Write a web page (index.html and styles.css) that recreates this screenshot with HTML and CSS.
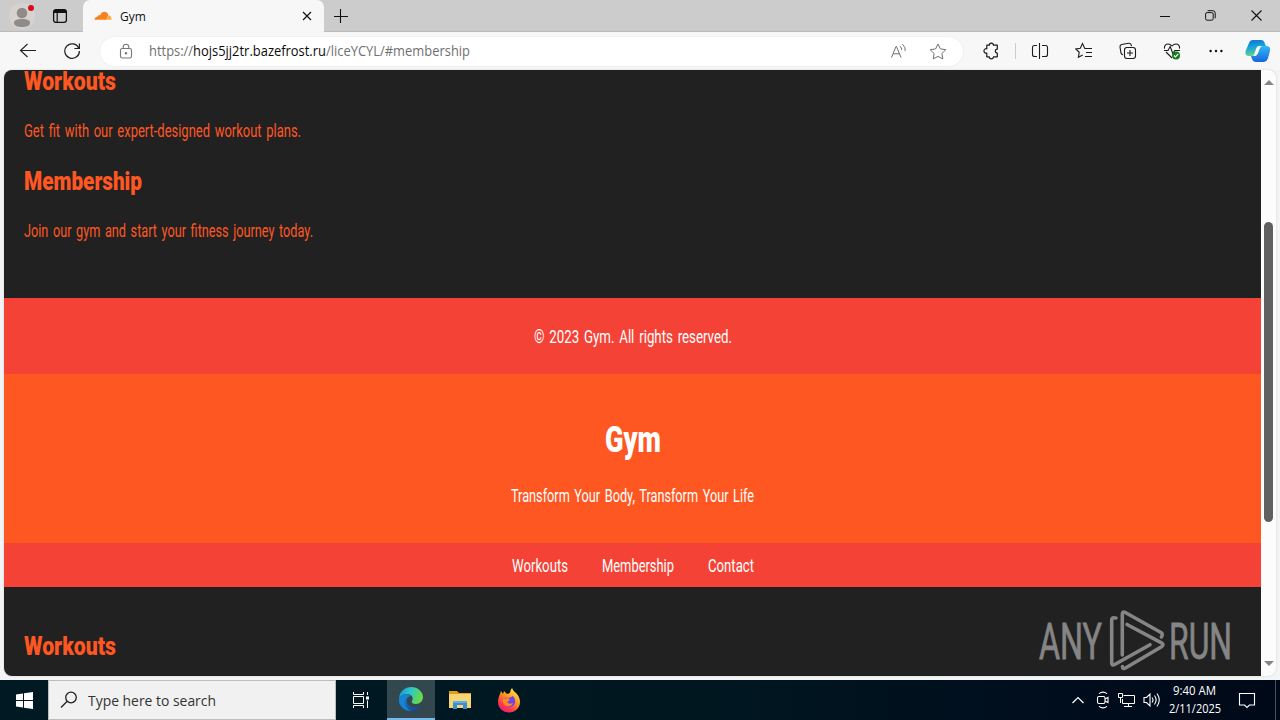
FILE: index.html
```html
<!DOCTYPE html>
<html lang="en">
<head>
<meta charset="utf-8">
<title>Gym</title>
<link rel="stylesheet" href="styles.css">
</head>
<body>
<div class="desktop">
  <div class="tabbar">
    <div class="corner">
      <svg class="avatar" width="28" height="28" viewBox="0 0 28 28"><circle cx="14" cy="14" r="13" fill="#d6d2d0"/><circle cx="14" cy="11" r="5.3" fill="#8f8b89"/><path d="M6 21c0-3 3-4 8-4s8 1 8 4c0 3-4 4-8 4s-8-1-8-4z" fill="#8f8b89"/><circle cx="23" cy="6" r="3" fill="#d90b18"/></svg>
      <svg class="tabs-icon" width="16" height="16" viewBox="0 0 16 16"><rect x="1.6" y="1.6" width="12.8" height="12.8" rx="2.4" fill="none" stroke="#111" stroke-width="1.3"/><path d="M1.5 5V3.5Q1.5 1.5 4 1.5h8q2.5 0 2.5 2V5z" fill="#111"/><path d="M5.2 5v9" stroke="#111" stroke-width="1.2"/></svg>
    </div>
    <div class="tab">
      <svg width="18" height="10" viewBox="0 0 18 10"><path d="M.5 8.7C.5 6.8 2 5.8 3.4 5.8c0-1.5 1.7-2 2.6-1.2C6.8 2.2 8.4.7 10.4.7c2 0 3.6 1.4 4 3.3l-2 4.7z" fill="#f6821f"/><path d="M12.2 8.7l2.4-4.5c1.8.1 2.9 1.8 2.900 4.500z" fill="#fbad41"/></svg>
      <span class="tab-title">Gym</span>
      <svg class="tab-close" width="10" height="10" viewBox="0 0 10 10"><path d="M1 1l8 8M9 1L1 9" stroke="#111" stroke-width="1.2"/></svg>
    </div>
    <svg class="plus" width="14" height="14" viewBox="0 0 14 14"><path d="M6.500 0v14M0 7.500h14" stroke="#111" stroke-width="1.1"/></svg>
    <div class="window-buttons">
      <svg width="10" height="11" viewBox="0 0 10 11"><path d="M0 6.500h10" stroke="#111"/></svg>
      <svg width="11" height="11" viewBox="0 0 11 11" fill="none" stroke="#111"><rect x=".6" y="2.6" width="7.6" height="7.6" rx="1.5"/><path d="M2.6.7h5.2q2.4 0 2.4 2.4v5.2"/></svg>
      <svg width="11" height="11" viewBox="0 0 11 11"><path d="M.5.5l10 10M10.500.5l-10 10" stroke="#111" stroke-width="1.1"/></svg>
    </div>
  </div>

  <div class="toolbar">
    <div class="nav-buttons">
      <svg width="18" height="16" viewBox="0 0 18 16" fill="none" stroke="#222" stroke-width="1.1"><path d="M17 7.500H1.500M8.500 1l-7 6.500 7 6.500"/></svg>
      <svg width="18" height="18" viewBox="0 0 18 18" fill="none" stroke="#222" stroke-width="1.2"><path d="M15.800 6.200A7.300 7.300 0 1 0 16.400 9M16.400 1.500v5h-5"/></svg>
    </div>
    <div class="address">
      <svg class="lock" width="14" height="17" viewBox="0 0 14 17" fill="none" stroke="#777" stroke-width="1.1"><rect x="1.500" y="5.500" width="11" height="9.500" rx="1.800"/><path d="M4.200 5.500V4a2.800 2.800 0 0 1 5.600 0v1.500"/><circle cx="7" cy="10.200" r=".7" fill="#444"/></svg>
      <svg class="url" width="330" height="24"><text x="0" y="17" textLength="321" lengthAdjust="spacingAndGlyphs">https://<tspan class="host">hojs5jj2tr.bazefrost.ru</tspan>/liceYCYL/#membership</text></svg>
      <svg class="read" width="18" height="16" viewBox="0 0 18 16" fill="none" stroke="#707070"><path d="M1.500 14.500L6 3.500h.5l4.500 11M3.200 10.800h6.200M10.200 3.200q1.600 1.800 1.400 3.800M12.400 1.200q3.500 3 2.800 6.800"/></svg>
      <svg width="18" height="17" viewBox="0 0 18 17" fill="none" stroke="#707070"><path d="M9 1l2.400 4.900 5.400.8-3.900 3.800.9 5.400L9 13.400l-4.800 2.500.9-5.400L1.200 6.700l5.400-.8z" stroke-linejoin="round"/></svg>
    </div>
    <div class="tools">
      <svg width="18" height="18" viewBox="0 0 18 18" fill="none" stroke="#1b1b1b" stroke-width="1.200"><path d="M4.800 3.200h2.500a2.100 2.100 0 0 1 4.200 0h3.800v4a1.900 1.900 0 1 0 0 3.900v3.700H11.500a2.100 2.100 0 0 1-4.200 0H4.800V11a2.200 2.200 0 1 1 0-4.200V3.200z" stroke-linejoin="round"/></svg>
      <i class="divider"></i>
      <svg width="18" height="18" viewBox="0 0 18 18" fill="none" stroke="#1b1b1b" stroke-width="1.100"><path d="M6 3.500H3.500q-2 0-2 2v7q0 2 2 2H6M11 3.500h3.500q2 0 2 2v7q0 2-2 2H11M8.500 1v16"/></svg>
      <svg width="18" height="18" viewBox="0 0 18 18" fill="none" stroke="#1b1b1b" stroke-width="1.100"><path d="M12 6.500H9.800L7.500 1.600 5.300 6.200l-4.500.7 3.400 3.400-.8 5 4.300-2.200M11 6.500h6M11 10.500h6M10 14.500h7"/></svg>
      <svg width="18" height="18" viewBox="0 0 18 18" fill="none" stroke="#1b1b1b" stroke-width="1.100"><path d="M4 12.700Q2.500 12.500 2 11L1 5q-.2-2 1.600-2.500l7-1.300q2-.2 2.600 1.600l.3 1.400"/><rect x="5.500" y="5.500" width="11" height="11" rx="2.500"/><path d="M11 8v6M8 11h6"/></svg>
      <svg width="18" height="18" viewBox="0 0 18 18" fill="none" stroke="#1b1b1b" stroke-width="1.100"><path d="M1.500 6.600C1 3.500 3 2 5 2q2.200 0 4 2 1.800-2 4-2c2 0 4 1.500 3.500 4.600M3 10l6 6M1 8.500h4l2.200-4 2.600 7 2-3H17"/><circle cx="13" cy="13.500" r="4" fill="#147a1b" stroke="none"/><path d="M11 13.500l1.400 1.500 2.800-3" stroke="#fff"/></svg>
      <svg width="18" height="18" viewBox="0 0 18 18" fill="#111"><circle cx="3.600" cy="9" r="1.200"/><circle cx="9" cy="9" r="1.200"/><circle cx="14.400" cy="9" r="1.200"/></svg>
      <svg class="copilot" width="26" height="24" viewBox="0 0 26 24"><defs><linearGradient id="cp1" x2=".2" y2="1"><stop stop-color="#1769d2"/><stop offset=".5" stop-color="#15a6dc"/><stop offset="1" stop-color="#65d18b"/></linearGradient><linearGradient id="cp2" x2="0" y2="1"><stop stop-color="#32b9f1"/><stop offset="1" stop-color="#1766df"/></linearGradient></defs><path d="M8 1h8q3 0 4 4l1 2h-5q-2 0-3 3l-2 5q-1 2-3 2H4q-5 0-3-6l3-7q1-3 4-3z" fill="url(#cp1)"/><path d="M18 7h3q5 0 4 5l-2 7q-1 4-5 4H11q-3 0-4-3l-1-3h4q2 0 3-3l2-5q1-2 3-2z" fill="url(#cp2)"/><path d="M13.500 7H16q-1.500 1-2.300 4l-1 3q-1 3-3.200 3H8q1-1 2-4l1-3q1-3 2.500-3z" fill="#f5fafc"/></svg>
    </div>
  </div>

  <div class="window">
    <main class="page">
      <section class="intro">
        <svg class="line heading first"><text x="20" y="21" textLength="92" lengthAdjust="spacingAndGlyphs">Workouts</text></svg>
        <svg class="line"><text x="20" y="22" textLength="277" lengthAdjust="spacingAndGlyphs">Get fit with our expert-designed workout plans.</text></svg>
        <svg class="line heading second"><text x="20" y="21" textLength="118" lengthAdjust="spacingAndGlyphs">Membership</text></svg>
        <svg class="line"><text x="20" y="22" textLength="289" lengthAdjust="spacingAndGlyphs">Join our gym and start your fitness journey today.</text></svg>
      </section>
      <footer class="copyright">
        <svg class="fit" width="199" height="30"><text x="1" y="22" textLength="198" lengthAdjust="spacingAndGlyphs">© 2023 Gym. All rights reserved.</text></svg>
      </footer>
      <header class="hero">
        <svg class="fit title" width="57" height="46"><text x="1" y="35" textLength="56" lengthAdjust="spacingAndGlyphs">Gym</text></svg>
        <svg class="fit" width="244" height="30"><text y="22" textLength="243" lengthAdjust="spacingAndGlyphs">Transform Your Body, Transform Your Life</text></svg>
      </header>
      <nav class="menu">
        <svg class="fit" width="56" height="30"><text y="22" textLength="56" lengthAdjust="spacingAndGlyphs">Workouts</text></svg>
        <svg class="fit" width="72" height="30"><text y="22" textLength="72" lengthAdjust="spacingAndGlyphs">Membership</text></svg>
        <svg class="fit" width="46" height="30"><text y="22" textLength="46" lengthAdjust="spacingAndGlyphs">Contact</text></svg>
      </nav>
      <section class="next">
        <svg class="line heading"><text x="20" y="21" textLength="92" lengthAdjust="spacingAndGlyphs">Workouts</text></svg>
      </section>
    </main>
    <div class="scrollbar">
      <i class="arrow up"></i><i class="thumb"></i><i class="arrow down"></i>
    </div>
    <svg class="watermark" width="204" height="66" viewBox="0 0 204 66">
      <text x="5" y="51" textLength="63" lengthAdjust="spacingAndGlyphs">ANY</text>
      <text x="135" y="51" textLength="63" lengthAdjust="spacingAndGlyphs">RUN</text>
      <g fill="none" stroke="#858585" stroke-width="3.600" stroke-linejoin="round" stroke-linecap="round"><path d="M82 10h-1q-3.300-1-3.300 2v43q0 3 3 1.500L116 36.700"/><path d="M88.300 47V6.500q0-3.500 3-2L127 24.500q2.500 2 .3 4.500"/><path d="M93 16.500l34.500 18.300q3 2 0 4L91.500 60q-3 1.500-3-1.500"/></g>
    </svg>
  </div>

  <div class="taskbar">
    <div class="start"><svg width="17" height="17" viewBox="0 0 17 17" fill="#fff"><path d="M0 2.500l7-1v6.500H0zM8 1.300L17 0v8H8zM0 9h7v6.500l-7-1zM8 9h9v8l-9-1.300z"/></svg></div>
    <div class="search">
      <svg width="18" height="18" viewBox="0 0 18 18" fill="none" stroke="#222" stroke-width="1.300"><circle cx="11" cy="6.500" r="5.300"/><path d="M7.200 10.300L1 16.500"/></svg>
      <svg class="search-text" width="140" height="24"><text x="0" y="18" textLength="128" lengthAdjust="spacingAndGlyphs">Type here to search</text></svg>
    </div>
    <div class="app tasks"><svg width="18" height="16" viewBox="0 0 18 16" fill="none" stroke="#fff"><path d="M1.500 0v2.500h10V0M1.500 16v-2.500h10V16M1.500 4.500h10v7h-10zM15.500 0v3M15.500 8.500V16"/><path d="M14 4.500h3v3h-3z" fill="#fff" stroke="none"/></svg></div>
    <div class="app active"><svg width="26" height="26" viewBox="0 0 26 26"><defs><linearGradient id="eg" x2="1" y2=".3"><stop stop-color="#1a91cf"/><stop offset=".5" stop-color="#2bc7cb"/><stop offset="1" stop-color="#68d84b"/></linearGradient><linearGradient id="eb" x2=".7" y2="1"><stop stop-color="#1690d8"/><stop offset="1" stop-color="#124a9a"/></linearGradient></defs><path d="M1 12C2 5 7 1 13 1c7 0 12 5 12 10 0 4-3 7-7 7-3 0-5-1-4-3 2-3 0-7-5-7-4 0-7 2-8 4z" fill="url(#eg)"/><path d="M1 12c2-4 8-5 11-2-3 1-4 4-3 7 2 5 8 6 14 3-3 4-6 5-10 5C6 25 0 19 1 12z" fill="url(#eb)"/><path d="M1 12c2-4 8-5 12-2-5 0-7 4-6 8 1 3 3 6 6 7C6 25 0 19 1 12z" fill="#1683d4"/></svg></div>
    <div class="app"><svg width="22" height="20" viewBox="0 0 22 20"><path d="M0 1h8l2 2h12v3H0z" fill="#e89b16"/><path d="M0 4h22v14H0z" fill="#f8d573"/><path d="M4 19v-6q0-2 2-2h10q2 0 2 2v6h-4v-4H8v4z" fill="#3b8fd0"/><path d="M4 13q0-2 2-2h10q2 0 2 2z" fill="#59afe8"/></svg></div>
    <div class="app"><svg width="24" height="25" viewBox="0 0 24 25"><defs><linearGradient id="ff" x1=".8" x2=".2" y2="1"><stop stop-color="#fff044"/><stop offset=".4" stop-color="#ff9b20"/><stop offset=".75" stop-color="#ff374d"/><stop offset="1" stop-color="#e51c82"/></linearGradient></defs><path d="M3 6l1-3 2 3 1-3 3 3 3-1q0-3 2-5 1 3 4 5 4 4 4 9c0 6-5 10.500-11 10.500S1 20 1 14c0-3 1-6 2-8z" fill="url(#ff)"/><path d="M7 11q2-2 5-1l4-2q3 3 2 7-1 4-6 4-4-1-5-4l4-1-1-2z" fill="#7545e4"/><path d="M6 11l5-1 2 2-3 2q2 3 6 1-2 4-6 3-5-1-4-7z" fill="#ff8a24"/></svg></div>
    <div class="tray">
      <svg width="12" height="8" viewBox="0 0 12 8" fill="none" stroke="#fff" stroke-width="1.200"><path d="M.5 7L6 1.500 11.500 7"/></svg>
      <svg width="14" height="18" viewBox="0 0 14 18" fill="none" stroke="#fff" stroke-width="1.100"><rect x="1.500" y="5.500" width="7.500" height="7" rx="1.500"/><path d="M9 8l3-1.500v5L9 10M3 2.600q4-3 8 0M3 15.400q4 3 8 0"/></svg>
      <svg width="17" height="15" viewBox="0 0 17 15" fill="none" stroke="#fff"><path d="M5.500 2.500h11v8h-12V6M10.500 10.500v3M6 13.500h8M.5.500h4v4h-4zM2.500 4.500V10"/></svg>
      <svg width="18" height="16" viewBox="0 0 18 16" fill="none" stroke="#fff" stroke-width="1.100"><path d="M1 5.500h2.500L7 2v12L3.500 10.500H1zM9 5.500q2 2.500 0 5M11.500 3.500q3.200 4.500 0 9M14 1.500q4.500 6.500 0 13"/></svg>
    </div>
    <div class="clock">
      <svg width="54" height="18"><text x="5" y="14" textLength="43" lengthAdjust="spacingAndGlyphs">9:40 AM</text></svg>
      <svg width="54" height="18"><text x="1" y="14" textLength="52" lengthAdjust="spacingAndGlyphs">2/11/2025</text></svg>
    </div>
    <svg class="notice" width="18" height="17" viewBox="0 0 18 17" fill="none" stroke="#fff" stroke-width="1.100"><path d="M1.500 1.500h15v11.500h-5L9 15.500 6.500 13h-5z"/></svg>
    <i class="peek"></i>
  </div>
</div>
</body>
</html>
```

FILE: styles.css
```css
* { box-sizing: border-box; }
body { margin: 0; font-family: "Open Sans", "Noto Sans", sans-serif; }
svg { display: block; flex: none; }
.desktop { width: 1280px; height: 720px; overflow: hidden; display: flex; flex-direction: column; background: #f3f4f5; }

.tabbar { height: 32px; flex: none; display: flex; align-items: center; background: #ccc; border-bottom: 1px solid #bababa; }
.corner { width: 83px; height: 32px; display: flex; align-items: center; padding-left: 8px; gap: 16px; border-radius: 0 0 6px 0; }
.tab { width: 241px; height: 33px; margin-top: 1px; padding: 0 12px 0 11px; display: flex; align-items: center; background: #f7f7f7; border-radius: 7px 7px 0 0; }
.tab-title { font-size: 12px; margin-left: 8px; color: #111; }
.tab-close { margin-left: auto; }
.plus { margin-left: 10px; }
.window-buttons { margin-left: auto; display: flex; gap: 35px; padding-right: 18px; }

.toolbar { height: 38px; flex: none; display: flex; align-items: center; background: #f7f7f7; }
.nav-buttons { width: 99px; padding-left: 19px; display: flex; align-items: center; gap: 26px; }
.address { width: 865px; height: 31px; display: flex; align-items: center; padding: 0 16px 0 19px; border-radius: 16px; background: #fff; border: 1px solid #f0f0f0; }
.url { margin-left: 16px; font-size: 14px; fill: #707070; overflow: visible; }
.host { fill: #0c0c0c; }
.read { margin-left: auto; margin-right: 21px; }
.tools { width: 316px; padding-left: 18px; display: flex; align-items: center; }
.tools svg { margin-right: 26px; }
.tools svg:first-child { margin-right: 15px; }
.divider { width: 1px; height: 16px; background: #ccc; margin-right: 15px; }
.tools .copilot { margin-right: 0; margin-left: -6px; }

.window { position: relative; width: 1272px; height: 606px; margin: 0 4px 4px; flex: none; display: flex; overflow: hidden; border-radius: 8px; background: #fcfcfc; box-shadow: 0 0 2px #c8c8c8; }
.page { width: 1257px; height: 606px; display: flex; flex-direction: column; overflow: hidden; background: #212121; font-family: Roboto, "Liberation Sans", sans-serif; font-size: 17.500px; word-spacing: 2px; }
.intro { height: 228px; display: flex; flex-direction: column; gap: 16px; flex: none; }
.line { width: 600px; height: 30px; fill: #ff5722; overflow: visible; }
.heading { font-size: 25.500px; font-weight: 900; }
.first { margin-top: -1px; }
.second { margin-top: 8px; }
.fit { fill: #fff; overflow: visible; }
.copyright { height: 76px; flex: none; display: flex; justify-content: center; padding-top: 23px; background: #f44336; }
.hero { height: 169px; flex: none; display: flex; flex-direction: column; align-items: center; padding-top: 43px; gap: 17px; background: #ff5722; }
.title { font-size: 36px; font-weight: 900; }
.menu { height: 44px; flex: none; display: flex; justify-content: center; gap: 34px; padding-top: 7px; background: #f44336; }
.next { padding-top: 47px; }

.scrollbar { width: 15px; height: 606px; display: flex; flex-direction: column; align-items: center; padding-top: 10px; }
.thumb { width: 9px; height: 300px; margin-top: 137px; border-radius: 5px; background: #606060; }
.arrow { width: 0; height: 0; border-left: 5px solid transparent; border-right: 5px solid transparent; }
.up { border-bottom: 5px solid #858585; }
.down { border-top: 5px solid #858585; margin-top: 139px; }
.watermark { position: absolute; left: 1030px; top: 538px; fill: #858585; stroke: #858585; stroke-width: .8; font-family: Roboto, sans-serif; font-size: 50px; overflow: visible; }

.taskbar { height: 40px; flex: none; display: flex; align-items: center; background: linear-gradient(90deg, #001922, #001720 55%, #000c1c 85%, #000918); }
.start { width: 48px; display: flex; justify-content: center; }
.search { width: 288px; height: 40px; display: flex; align-items: center; padding-left: 11px; gap: 10px; background: #f1f1f1; border: 1px solid #bdbdbd; }
.search-text { font-family: "Open Sans", "Noto Sans", sans-serif; font-size: 15px; fill: #333; }
.app { width: 49px; height: 40px; display: flex; align-items: center; justify-content: center; }
.tasks { width: 51px; padding-right: 2px; }
.active { width: 48px; background: #33474f; border-bottom: 2px solid #76b9ed; }
.tray { margin-left: auto; display: flex; align-items: center; gap: 8px; }
.tray svg:first-child { margin-right: 4px; }
.clock { width: 54px; margin-left: 7px; height: 38px; font-size: 12px; fill: #fff; }
.notice { margin-left: 16px; }
.peek { width: 1px; height: 40px; margin-left: 19px; margin-right: 4px; background: #4b5360; }
```
